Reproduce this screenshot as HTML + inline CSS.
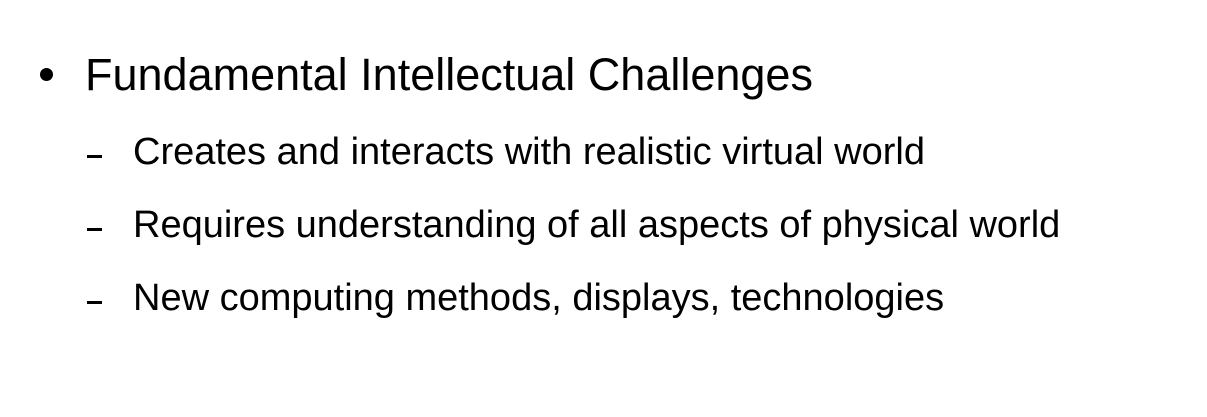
<html><head><style>
body{margin:0;width:1207px;height:417px;background:#fff;font-family:"Liberation Sans",Arial,sans-serif;color:#000;position:relative;overflow:hidden}
.t{position:absolute;white-space:nowrap;line-height:1}
.b{position:absolute;left:40px;top:68px;width:13px;height:13px;border-radius:50%;background:#000}
.d{position:absolute;left:87px;width:15px;height:3px;background:#000}
</style></head><body>
<div class="b"></div>
<div class="t" style="left:85px;top:52px;font-size:45px">Fundamental Intellectual Challenges</div>
<div class="d" style="top:155px"></div>
<div class="t" style="left:133px;top:133px;font-size:38px">Creates and interacts with realistic virtual world</div>
<div class="d" style="top:228px"></div>
<div class="t" style="left:133px;top:206px;font-size:38px">Requires understanding of all aspects of physical world</div>
<div class="d" style="top:301px"></div>
<div class="t" style="left:133px;top:279px;font-size:38px">New computing methods, displays, technologies</div>
</body></html>
